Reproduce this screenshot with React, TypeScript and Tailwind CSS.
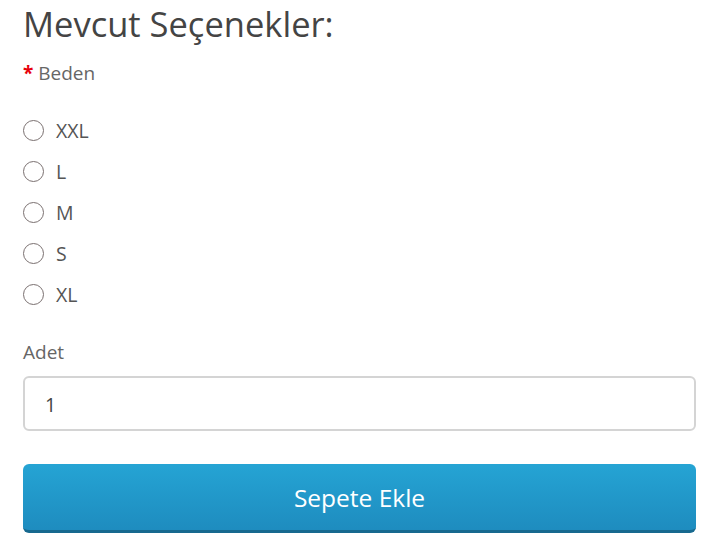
import { useState } from 'react';

const sizes = ['XXL', 'L', 'M', 'S', 'XL'];

export default function App() {
  const [size, setSize] = useState<string | null>(null);
  const [qty, setQty] = useState('1');

  return (
    <div
      className="w-[714px] h-[543px] bg-white pl-[23px] pr-[18px] pt-[2px] text-[#555]"
      style={{ fontFamily: '"Open Sans", "Liberation Sans", sans-serif' }}
    >
      <h2 className="text-[34.5px] leading-[44px] text-[#444]">Mevcut Seçenekler:</h2>

      {/* Beden */}
      <div className="mt-[15px] text-[19px] leading-[24px] text-[#666]">
        <span className="font-bold text-red-600">*</span> Beden
      </div>
      <div className="mt-[25px] flex flex-col">
        {sizes.map((s) => (
          <label key={s} className="flex items-center h-[41px] cursor-pointer">
            <span className="w-[21px] h-[21px] rounded-full border border-[#7a7070] bg-white flex items-center justify-center">
              {size === s && <span className="w-[11px] h-[11px] rounded-full bg-[#0075ff]" />}
            </span>
            <input
              type="radio"
              name="beden"
              className="hidden"
              checked={size === s}
              onChange={() => setSize(s)}
            />
            <span className="ml-[12px] text-[19.5px] text-[#555]">{s}</span>
          </label>
        ))}
      </div>

      {/* Adet */}
      <div className="mt-[25px] text-[19px] leading-[24px] text-[#666]">Adet</div>
      <input
        value={qty}
        onChange={(e) => setQty(e.target.value)}
        className="mt-[12px] w-full h-[55px] rounded-[6px] border-2 border-[#d4d4d4] px-[20px] pt-[2px] text-[19.5px] text-[#444] outline-none"
      />

      <button className="mt-[33px] w-full h-[69px] rounded-[6px] border-b-[3px] border-[#17698f] bg-gradient-to-b from-[#25a4d4] to-[#1e8cbf] pt-[2px] text-white text-[24.5px]">
        Sepete Ekle
      </button>
    </div>
  );
}
